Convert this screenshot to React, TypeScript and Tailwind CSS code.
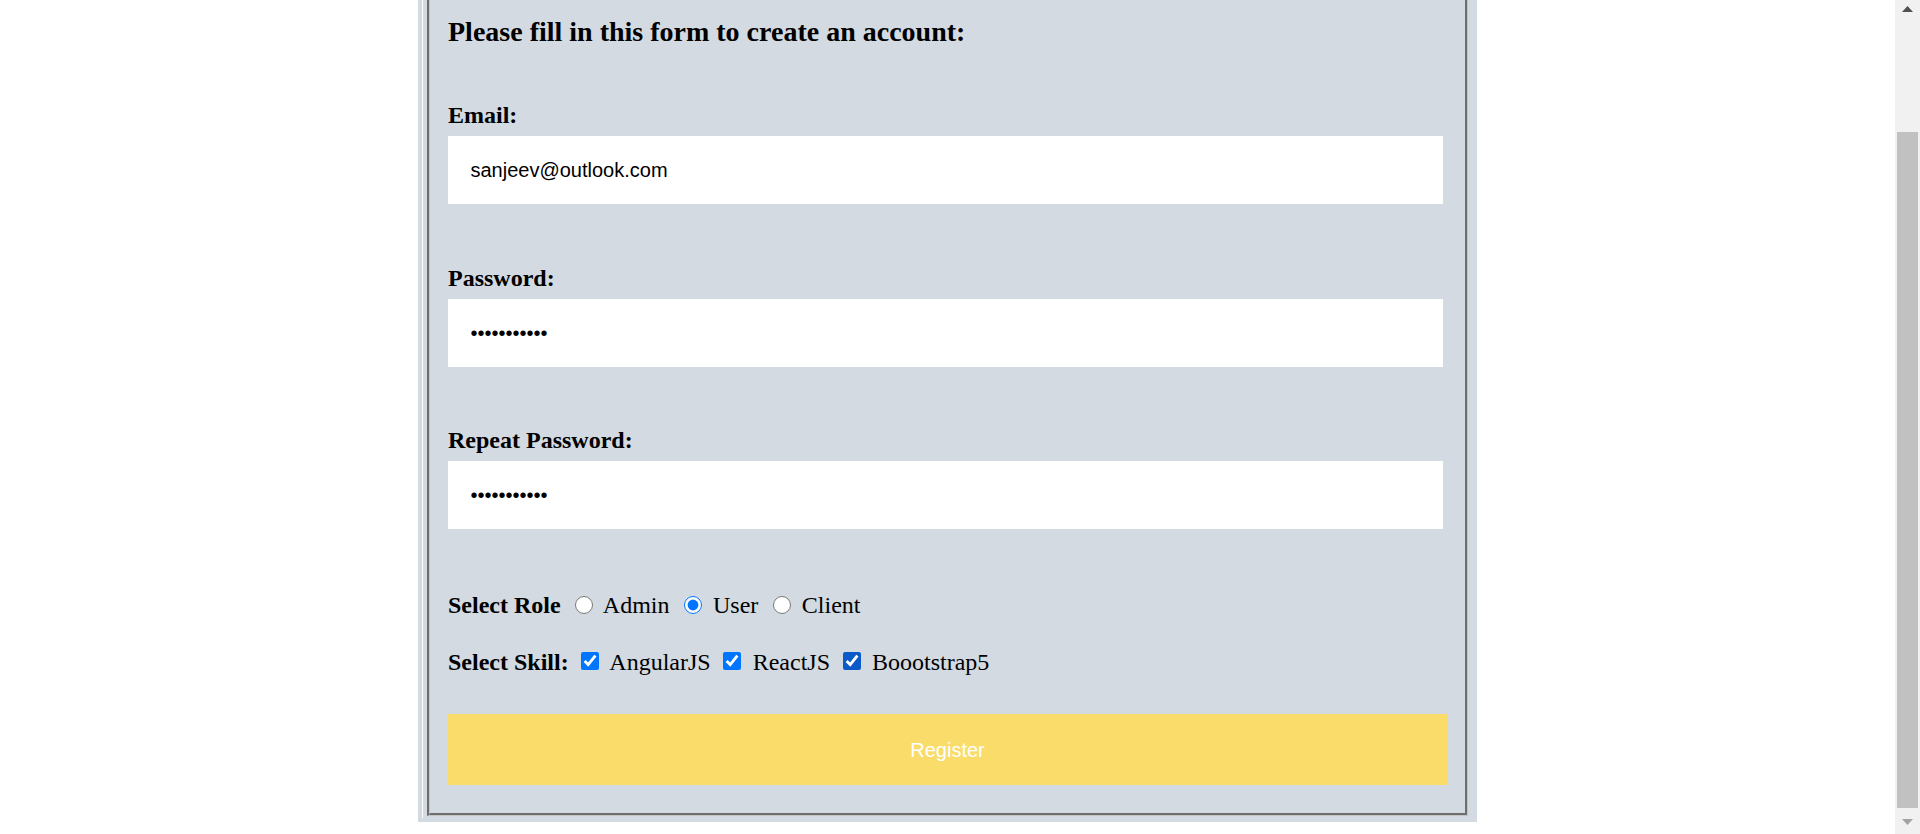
import React from "react";

const serif = { fontFamily: '"Liberation Serif", "Times New Roman", serif' };
const sans = { fontFamily: '"Liberation Sans", Arial, sans-serif' };

function Field({ label, type, value, mb }: { label: string; type: string; value: string; mb: string }) {
  return (
    <div className={mb}>
      <div className="h-[28px] text-[24px] font-bold leading-[28px] text-black">{label}</div>
      <input
        type={type}
        value={value}
        readOnly
        className="mt-[7px] block h-[68px] w-[995px] bg-white px-[22.5px] text-[20px] leading-[23px] text-black outline-none"
        style={sans}
      />
    </div>
  );
}

export default function App() {
  return (
    <div className="flex h-[834px] w-full overflow-hidden bg-white" style={serif}>
      <div className="flex flex-1 justify-center">
        <div className="flex h-[822px] w-[1059px] flex-col bg-[#d3dae1] pb-[4px] pl-[4px] pr-[9px]">
          <div className="flex flex-1 flex-col border-l border-white pb-[2px] pl-[4px]">
            <div className="flex flex-1 flex-col border-b border-l-2 border-r border-b-[#c4c4c4] border-l-[#6e6e6e] border-r-[#c4c4c4]">
              <div className="flex flex-1 flex-col border-b-2 border-l border-r-2 border-b-[#6e6e6e] border-l-[#c4c4c4] border-r-[#6e6e6e] px-[18px]">
                <h3 className="pt-[15.5px] text-[28px] font-bold leading-[32px] text-black">
                  Please fill in this form to create an account:
                </h3>
                <div className="mt-[53.5px]">
                  <Field label="Email:" type="text" value="sanjeev@outlook.com" mb="mb-[60px]" />
                  <Field label="Password:" type="password" value="sanjeev1234" mb="mb-[59px]" />
                  <Field label="Repeat Password:" type="password" value="sanjeev1234" mb="mb-0" />
                </div>
                <div className="mt-[61.5px] text-[24px] leading-[28px] text-black">
                  <b>Select Role</b>{" "}
                  <input type="radio" name="role" readOnly className="ml-[8.25px] mr-[5.25px] h-[18px] w-[18px] align-[-1px]" />{" "}
                  Admin{" "}
                  <input type="radio" name="role" defaultChecked className="ml-[8.25px] mr-[5.25px] h-[18px] w-[18px] align-[-1px]" />{" "}
                  User{" "}
                  <input type="radio" name="role" className="ml-[8.25px] mr-[5.25px] h-[18px] w-[18px] align-[-1px]" />{" "}
                  Client
                </div>
                <div className="mt-[29.5px] text-[24px] leading-[28px] text-black">
                  <b>Select Skill:</b>{" "}
                  <input type="checkbox" defaultChecked className="ml-[6.75px] mr-[5.25px] h-[18px] w-[18px]" />{" "}
                  AngularJS{" "}
                  <input type="checkbox" defaultChecked className="ml-[6.75px] mr-[5.25px] h-[18px] w-[18px]" />{" "}
                  ReactJS{" "}
                  <input type="checkbox" defaultChecked className="ml-[6.75px] mr-[5.25px] h-[18px] w-[18px] accent-[#0a5bc9]" />{" "}
                  Boootstrap5
                </div>
                <button
                  type="button"
                  className="mt-[38px] h-[71px] w-full bg-[#f9dc6a] text-[20px] text-white"
                  style={sans}
                >
                  Register
                </button>
              </div>
            </div>
          </div>
        </div>
      </div>
      <div className="flex h-[834px] w-[25px] flex-col bg-[#f1f1f1]">
        <div className="flex h-[25px] items-start justify-center pt-[6px]">
          <svg width="11" height="6" viewBox="0 0 11 6">
            <polygon points="5.5,0 11,6 0,6" fill="#505050" />
          </svg>
        </div>
        <div className="flex flex-1 flex-col px-[2px]">
          <div className="mt-[107px] h-[676px] bg-[#c1c1c1]" />
        </div>
        <div className="flex h-[25px] items-start justify-center pt-[10px]">
          <svg width="11" height="6" viewBox="0 0 11 6">
            <polygon points="0,0 11,0 5.5,6" fill="#a3a3a3" />
          </svg>
        </div>
      </div>
    </div>
  );
}
